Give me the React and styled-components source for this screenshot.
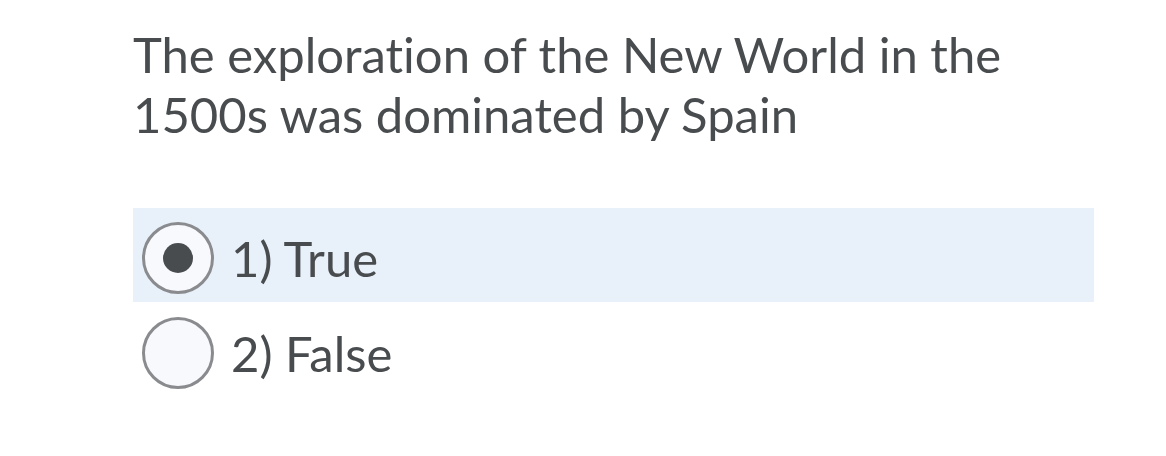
import React from "react";
import styled, { createGlobalStyle } from "styled-components";

const Global = createGlobalStyle`
  html, body { margin: 0; padding: 0; background: #ffffff; }
  body {
    font-family: Lato, "Open Sans", sans-serif;
    color: #494c4e;
    font-variant-ligatures: none;
  }
`;

const Page = styled.div`
  padding: 24px 72px 0 133px;
`;

const Question = styled.div`
  font-size: 49px;
  line-height: 60px;
  margin: 0 0 64px 0;
`;

const Options = styled.div`
  display: flex;
  flex-direction: column;
  gap: 1px;
`;

const Row = styled.label`
  display: flex;
  align-items: center;
  gap: 17px;
  height: 94px;
  padding: 6px 0 0 9px;
  box-sizing: border-box;
  background: ${(p) => (p.$selected ? "#e8f0fa" : "transparent")};
`;

const Radio = styled.span`
  width: 72px;
  height: 72px;
  box-sizing: border-box;
  border-radius: 50%;
  border: 3px solid #898b8e;
  background: #f8f9fc;
  display: flex;
  align-items: center;
  justify-content: center;
  flex-shrink: 0;
`;

const Dot = styled.span`
  width: 30px;
  height: 30px;
  border-radius: 50%;
  background: #494c4e;
`;

const Label = styled.span`
  font-size: 49px;
  line-height: 1;
`;

export default function App() {
  const options = [
    { text: "1) True", selected: true },
    { text: "2) False", selected: false },
  ];
  return (
    <>
      <Global />
      <Page>
        <Question>
          The exploration of the New World in the
          <br />
          1500s was dominated by Spain
        </Question>
        <Options>
          {options.map((o) => (
            <Row key={o.text} $selected={o.selected}>
              <Radio>{o.selected && <Dot />}</Radio>
              <Label>{o.text}</Label>
            </Row>
          ))}
        </Options>
      </Page>
    </>
  );
}
